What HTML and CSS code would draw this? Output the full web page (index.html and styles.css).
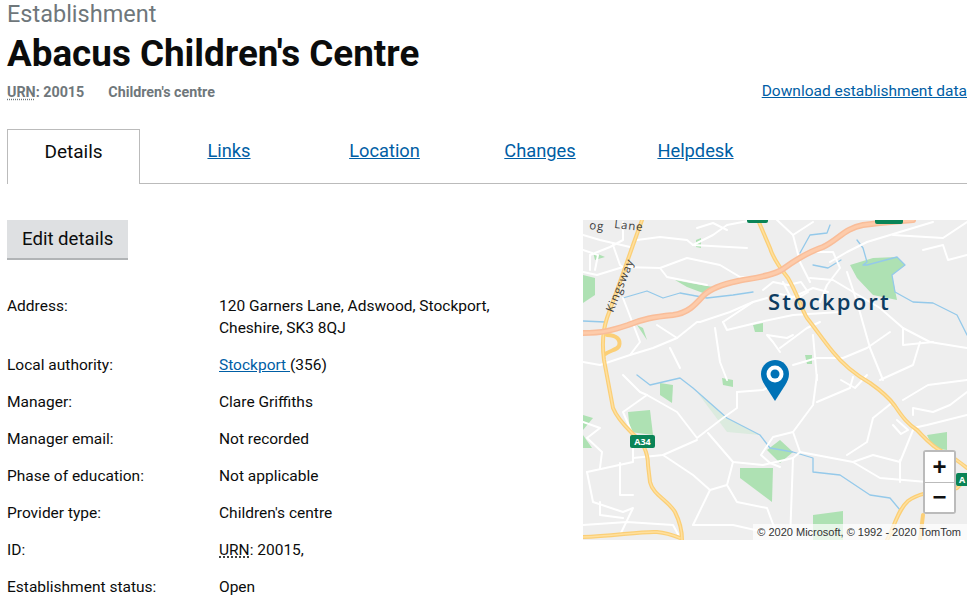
FILE: index.html
```html
<!DOCTYPE html>
<html lang="en">
<head>
  <meta charset="UTF-8">
  <title>Abacus Children's Centre</title>
  <link rel="stylesheet" href="styles.css">
</head>
<body>
  <header class="page-head">
    <p class="caption">Establishment</p>
    <h1>Abacus Children's Centre</h1>
    <div class="meta-row">
      <p class="meta"><span><abbr>URN</abbr>: 20015</span><span>Children's centre</span></p>
      <a href="#" class="download">Download establishment data</a>
    </div>
  </header>

  <nav class="tabs">
    <span class="tab tab-active">Details</span>
    <a href="#" class="tab">Links</a>
    <a href="#" class="tab">Location</a>
    <a href="#" class="tab">Changes</a>
    <a href="#" class="tab">Helpdesk</a>
  </nav>

  <main class="content">
    <section class="details">
      <a href="#" class="button">Edit details</a>
      <dl class="rows">
        <div class="row"><dt>Address:</dt><dd>120 Garners Lane, Adswood, Stockport, Cheshire, SK3 8QJ</dd></div>
        <div class="row"><dt>Local authority:</dt><dd><a href="#">Stockport </a>(356)</dd></div>
        <div class="row"><dt>Manager:</dt><dd>Clare Griffiths</dd></div>
        <div class="row"><dt>Manager email:</dt><dd>Not recorded</dd></div>
        <div class="row"><dt>Phase of education:</dt><dd>Not applicable</dd></div>
        <div class="row"><dt>Provider type:</dt><dd>Children's centre</dd></div>
        <div class="row"><dt>ID:</dt><dd><abbr>URN</abbr>: 20015,</dd></div>
        <div class="row"><dt>Establishment status:</dt><dd>Open</dd></div>
      </dl>
    </section>

    <div class="map">
      <svg class="map-base" viewBox="0 0 384 320" width="384" height="320">
        <g class="park">
          <polygon points="92,60 107,63 130,67 120,73 104,67"/>
          <polygon points="0,55 12,58 12,75 0,83"/>
          <polygon points="10,32 22,37 12,40"/>
          <polygon points="54,105 60,108 64,120"/>
          <polygon points="170,105 180,103 180,112 172,112"/>
          <polygon points="222,135 229,135 229,144 224,144"/>
          <polygon points="267,45 290,38 314,37 322,45 309,55 314,80 290,75 274,58"/>
          <polygon points="113,20 118,18 118,28 113,27"/>
          <polygon points="77,163 90,165 89,183 77,175"/>
          <polygon points="45,192 67,190 70,215 47,212"/>
          <polygon points="157,248 190,248 189,282 157,258"/>
          <polygon points="184,230 197,220 210,232 197,243"/>
          <polygon points="230,295 260,291 260,320 230,320"/>
          <polygon points="0,195 10,198 0,210"/>
          <polygon points="0,215 9,228 0,228"/>
          <polygon points="344,215 364,212 364,230 350,228"/>
          <polygon points="139,158 150,160 150,167 140,165"/>
        </g>
        <polygon class="park-pale" points="114,172 144,198 177,215 144,212"/>
        <g class="river">
          <polyline points="0,101 22,102"/>
          <polyline points="40,78 64,71 80,78 97,73 124,78 150,75 170,72"/>
          <polyline points="217,33 227,15 244,13 247,5"/>
          <polyline points="274,20 280,28 284,42 280,45 284,45 314,37 322,45 309,55 312,72 330,82 350,83 374,95 384,115"/>
          <polyline points="54,155 67,165 97,158 110,168 144,198 177,215 187,228 210,232 230,238 230,252 257,255 287,275 307,278 317,290"/>
          <polyline points="230,45 245,48 258,40"/>
        </g>
        <g class="road">
          <polyline points="0,52 14,55 40,47 77,48 104,38 137,45 157,57 170,58"/>
          <polyline points="77,48 84,57 124,65"/>
          <polyline points="0,15 17,20 47,27"/>
          <polyline points="54,20 77,17 104,20 110,25 164,28"/>
          <polyline points="110,25 130,15 144,5 170,0"/>
          <polyline points="194,0 210,15 217,42 227,62"/>
          <polyline points="210,15 230,2"/>
          <polyline points="227,32 250,32 257,48 244,65 237,82"/>
          <polyline points="227,58 250,60 297,88 320,108 347,122 384,128"/>
          <polyline points="264,52 274,82 287,128 300,160"/>
          <polyline points="140,102 170,82 184,78"/>
          <polyline points="140,102 144,110 177,102 210,95 257,92"/>
          <polyline points="117,102 147,92 170,82"/>
          <polyline points="40,78 57,122 47,135 17,145 0,142"/>
          <polyline points="74,105 94,118 114,102 117,102"/>
          <polyline points="94,118 70,128 47,135"/>
          <polyline points="132,108 137,142 144,160"/>
          <polyline points="87,128 97,148"/>
          <polyline points="230,115 234,160"/>
          <polyline points="197,128 224,108 237,102"/>
          <polyline points="210,115 204,118 184,115 190,122 197,132"/>
          <polyline points="284,22 330,8 350,2"/>
          <polyline points="180,70 190,62 205,65 218,62 225,72 215,78 197,74"/>
          <polyline points="200,62 208,78 230,68 245,72"/>
          <polyline points="0,30 15,35 12,50"/>
          <polyline points="340,30 360,25 365,40 384,35"/>
          <polyline points="7,50 7,35 27,27 40,20 40,2"/>
          <polyline points="30,25 37,45 40,47"/>
          <polyline points="114,8 130,3 144,10"/>
          <polyline points="310,15 360,18 384,2"/>
          <polyline points="247,42 264,32 284,22"/>
          <polyline points="210,145 234,138 260,138 284,128 307,112"/>
          <polyline points="320,108 320,125 350,122"/>
          <polyline points="337,122 330,145 297,160"/>
          <polyline points="154,172 154,188 140,198 114,218 94,192 64,175 40,192 50,215 50,242 4,252"/>
          <polyline points="114,220 80,235 50,238"/>
          <polyline points="125,213 150,242 180,245 210,238"/>
          <polyline points="150,242 144,265 154,282 184,288 194,315"/>
          <polyline points="144,265 127,270 110,305"/>
          <polyline points="80,235 110,255 127,270"/>
          <polyline points="207,320 210,238 217,232 210,212 230,185 234,155"/>
          <polyline points="234,182 267,168 270,157"/>
          <polyline points="210,212 190,217 178,235 187,243 197,247"/>
          <polyline points="217,232 270,242 297,258 344,262"/>
          <polyline points="270,242 290,235 317,242 330,210"/>
          <polyline points="264,235 284,222 290,198 310,182"/>
          <polyline points="317,262 317,240"/>
          <polyline points="330,208 344,205 384,195"/>
          <polyline points="320,180 345,165 384,160"/>
          <polyline points="314,200 325,210 318,214 310,205"/>
          <polyline points="330,195 330,188 350,192 367,185 384,172"/>
          <polyline points="0,202 17,208 4,218 19,232 17,248"/>
          <polyline points="4,252 10,282 40,292 50,288 37,315"/>
          <polyline points="37,243 37,275 50,275"/>
          <polyline points="17,282 17,295 40,298"/>
          <polyline points="0,305 44,302 90,305 97,318"/>
          <polyline points="110,305 150,305 194,315"/>
          <polyline points="154,172 180,170 200,160"/>
          <polyline points="258,160 272,168 284,155"/>
          <polyline points="40,155 57,172 64,175"/>
        </g>
        <g class="yellow">
          <path d="M175 0 L187 28 C190 38 197 48 205 58 C215 75 218 88 224 98 C235 112 240 120 250 132 C258 142 268 152 287 163 C297 170 305 176 312 186 C320 198 325 204 334 210 C342 218 348 226 360 232 C372 238 378 243 384 248"/>
          <path d="M59 0 L50 25 L37 62 L24 98 C20 110 19 125 21 140 L30 188 C35 200 44 208 50 214 C60 222 65 232 65 245 L67 262 C70 275 85 280 92 292 C97 302 99 310 99 320"/>
          <path d="M0 317 C30 316 60 311 74 312 C85 313 92 316 97 318"/>
          <path d="M304 320 C312 305 315 290 325 281 C340 270 360 272 374 268 L384 258"/>
          <path d="M340 295 L337 320"/>
          <path d="M24 115 C34 115 38 120 36 126 C34 130 28 130 22 134"/>
        </g>
        <g class="yellow-in">
          <path d="M175 0 L187 28 C190 38 197 48 205 58 C215 75 218 88 224 98 C235 112 240 120 250 132 C258 142 268 152 287 163 C297 170 305 176 312 186 C320 198 325 204 334 210 C342 218 348 226 360 232 C372 238 378 243 384 248"/>
          <path d="M59 0 L50 25 L37 62 L24 98 C20 110 19 125 21 140 L30 188 C35 200 44 208 50 214 C60 222 65 232 65 245 L67 262 C70 275 85 280 92 292 C97 302 99 310 99 320"/>
          <path d="M0 317 C30 316 60 311 74 312 C85 313 92 316 97 318"/>
          <path d="M304 320 C312 305 315 290 325 281 C340 270 360 272 374 268 L384 258"/>
        </g>
        <path class="motorway" d="M0 113 C20 113 30 110 45 105 C60 99 70 97 90 95 C105 93 112 85 120 76 C128 68 140 64 155 61 C170 58 190 56 200 49 C215 38 225 32 240 27 C255 20 262 8 280 5 L297 3 L330 0"/>
        <path class="motorway-in" d="M0 113 C20 113 30 110 45 105 C60 99 70 97 90 95 C105 93 112 85 120 76 C128 68 140 64 155 61 C170 58 190 56 200 49 C215 38 225 32 240 27 C255 20 262 8 280 5 L297 3 L330 0"/>
        <rect class="shield" x="164" y="-6" width="21" height="9" rx="2"/>
        <rect class="shield" x="292" y="-6" width="28" height="10" rx="2"/>
        <rect class="shield" x="47" y="215" width="25" height="13" rx="2"/>
        <rect class="shield" x="373" y="253" width="14" height="13" rx="2"/>
        <text class="shield-text" x="59.5" y="225">A34</text>
        <text class="shield-text" x="379" y="263">A</text>
        <text class="map-small" transform="rotate(-68 30 93)" x="30" y="93">Kingsway</text>
        <text class="map-small" transform="rotate(6 6 9)" x="6" y="9">og</text>
        <text class="map-small" transform="rotate(6 31 8)" x="31" y="8">Lane</text>
        <text class="map-city" x="185" y="90">Stockport</text>
      </svg>

      <svg class="pin" viewBox="0 0 28 41" width="28" height="41">
        <path class="pin-body" d="M14 0C6.3 0 0 6.2 0 14c0 4.200 1.700 7.500 3.600 10.800L14 41l10.400-16.200C26.300 21.500 28 18.200 28 14 28 6.200 21.700 0 14 0z"/>
        <circle class="pin-ring" cx="14" cy="14" r="8.500"/>
        <circle class="pin-body" cx="14" cy="14" r="4.500"/>
      </svg>

      <div class="zoom-box">
        <button class="zoom-btn">+</button>
        <button class="zoom-btn zoom-minus">&minus;</button>
      </div>
      <p class="attribution">&copy; 2020 Microsoft, &copy; 1992 - 2020 TomTom</p>
    </div>
  </main>
</body>
</html>
```

FILE: styles.css
```css
/* Page */
body {
  font-family: Roboto, "Noto Sans", sans-serif;
  margin: 0;
  padding: 0 4px 0 7px;
  color: #0b0c0c;
  background: white;
  font-size: 15.500px;
  line-height: 22px;
  overflow: hidden;
  height: 601px;
  box-sizing: border-box;
}

a {
  color: #005ea5;
}

abbr {
  text-decoration: underline dotted;
  text-underline-offset: 2px;
}

/* Heading */
.caption {
  margin: 0;
  font-size: 23.500px;
  line-height: 28px;
  color: #6f777b;
}

h1 {
  margin: 5px 0 0;
  font-size: 36.800px;
  line-height: 42px;
  font-weight: 700;
}

.meta-row {
  display: flex;
  justify-content: space-between;
  align-items: flex-start;
  margin-top: 5px;
}

.meta {
  margin: 1px 0 0;
  font-size: 14.300px;
  font-weight: 700;
  color: #6f777b;
  display: flex;
  gap: 24px;
}

/* Tabs */
.tabs {
  display: flex;
  gap: 22.500px;
  margin-top: 26px;
  height: 55px;
  border-bottom: 1px solid #bbbbbb;
  box-sizing: border-box;
}

.tab {
  width: 133px;
  box-sizing: border-box;
  text-align: center;
  font-size: 18.300px;
  padding-top: 11px;
}

.tab-active {
  height: 55px;
  background: white;
  border: 1px solid #bbbbbb;
  border-bottom: none;
  font-size: 19px;
  padding-top: 11px;
}

/* Main columns */
.content {
  display: flex;
  justify-content: space-between;
  margin-top: 36px;
}

.details {
  width: 500px;
}

.button {
  display: inline-block;
  height: 40px;
  box-sizing: border-box;
  padding: 8px 15px 0;
  background: #dee0e2;
  border-bottom: 2px solid #b1b4b6;
  color: #0b0c0c;
  font-size: 18.600px;
  text-decoration: none;
}

.rows {
  margin: 35px 0 0;
}

.row {
  display: flex;
  margin-bottom: 15px;
}

dt {
  width: 212px;
  flex: none;
}

dd {
  margin: 0;
  width: 285px;
}

/* Map */
.map {
  position: relative;
  width: 384px;
  height: 320px;
  background: #eeeeee;
  overflow: hidden;
}

.map-base {
  display: block;
}

.map-base polyline,
.map-base .yellow path,
.map-base .yellow-in path,
.motorway,
.motorway-in {
  fill: none;
  stroke-linejoin: round;
  stroke-linecap: round;
}

.park polygon {
  fill: #aee1b3;
}

.park-pale {
  fill: #dcebdf;
}

.river polyline {
  stroke: #94c9ea;
  stroke-width: 1.300;
}

.road polyline {
  stroke: white;
  stroke-width: 2;
}

.yellow path {
  stroke: #fbcf77;
  stroke-width: 4;
}

.yellow-in path {
  stroke: #ffe09e;
  stroke-width: 1.500;
}

.motorway {
  stroke: #f9bd99;
  stroke-width: 6;
}

.motorway-in {
  stroke: #fdcbaa;
  stroke-width: 3;
}

.shield {
  fill: #0a8457;
}

.shield-text {
  fill: white;
  font: 700 9px "Open Sans", sans-serif;
  text-anchor: middle;
}

.map-small {
  fill: #3d3d3d;
  font: 11.500px "Open Sans", sans-serif;
  letter-spacing: 0.800px;
}

.map-city {
  fill: #0d3c61;
  font: 600 22px "Open Sans", sans-serif;
  letter-spacing: 2.200px;
}

.pin {
  position: absolute;
  left: 178px;
  top: 140px;
}

.pin-body {
  fill: #0072b6;
}

.pin-ring {
  fill: white;
}

.zoom-box {
  position: absolute;
  left: 340px;
  top: 230px;
  width: 33px;
  height: 64px;
  box-sizing: border-box;
  display: flex;
  flex-direction: column;
  background: white;
  border: 2px solid #bbbbbb;
  border-radius: 3px;
}

.zoom-btn {
  flex: 1;
  padding: 0;
  border: none;
  background: white;
  color: #111111;
  font: 700 24px/1 "Liberation Sans", sans-serif;
}

.zoom-minus {
  border-top: 1px solid #bbbbbb;
}

.attribution {
  position: absolute;
  right: 0;
  bottom: 0;
  margin: 0;
  padding: 0 6px 0 4px;
  background: rgba(255, 255, 255, 0.7);
  color: #333333;
  font: 11px/16px "Liberation Sans", sans-serif;
}
```
